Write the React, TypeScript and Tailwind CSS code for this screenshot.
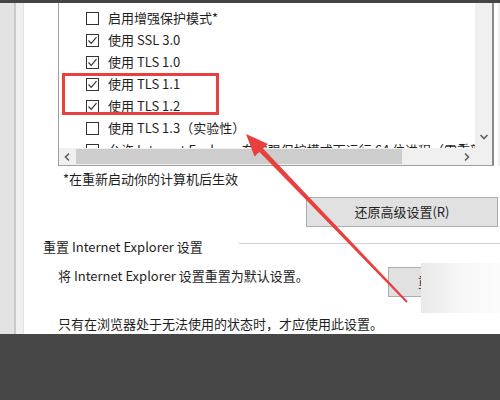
import React from "react";

const rows = [
  { label: "启用增强保护模式*", checked: false },
  { label: "使用 SSL 3.0", checked: true },
  { label: "使用 TLS 1.0", checked: true },
  { label: "使用 TLS 1.1", checked: true },
  { label: "使用 TLS 1.2", checked: true },
  { label: "使用 TLS 1.3（实验性）", checked: false },
  { label: "允许 Internet Explorer 在增强保护模式下运行 64 位进程（需重新启动计算机）", checked: false },
];

const CheckBox = ({ checked }: { checked: boolean }) => (
  <span className="w-[13px] h-[13px] border border-[#333] bg-white flex items-center justify-center shrink-0">
    {checked && (
      <svg width="11" height="11" viewBox="0 0 11 11">
        <polyline points="1.5,5.5 4.2,8.3 9.5,2.2" fill="none" stroke="#333" strokeWidth="1.2" />
      </svg>
    )}
  </span>
);

const Chevron = ({ dir }: { dir: "left" | "right" | "down" }) => {
  const pts = dir === "left" ? "6,1.5 2.5,5 6,8.5" : dir === "right" ? "3,1.5 6.5,5 3,8.5" : "1.5,3 5,6.5 8.5,3";
  return (
    <svg width="10" height="10" viewBox="0 0 10 10">
      <polyline points={pts} fill="none" stroke="#606060" strokeWidth="1.6" />
    </svg>
  );
};

export default function App() {
  return (
    <div className="relative w-[500px] h-[400px] overflow-hidden bg-white flex flex-col text-[13px] text-[#1e1e1e] font-['Noto_Sans_CJK_SC','Noto_Sans',sans-serif]">
      <div className="h-[3px] bg-[#454545]" />
      <div className="flex flex-1 min-h-0">
        <div className="w-[14px] bg-[#e3e3e3]" />
        <div className="w-[2px] bg-[#c9c9c9]" />
        <div className="w-[7px] bg-[#f0f0f0]" />
        <div className="w-px bg-[#e2e2e2]" />
        <div className="flex-1 flex flex-col">
          <div className="flex">
            <div className="ml-[34px] w-[436px] h-[163px] border-l border-b border-r-2 border-l-[#a0a0a0] border-b-[#a0a0a0] border-r-[#8a8a8a] flex flex-col">
              <div className="flex flex-1 min-h-0">
                <div className="flex-1 overflow-hidden pt-[4px]">
                  {rows.map((r) => (
                    <div key={r.label} className="h-[22px] flex items-center pl-[27px] whitespace-nowrap">
                      <CheckBox checked={r.checked} />
                      <span className="ml-[9px] leading-[22px]">{r.label}</span>
                    </div>
                  ))}
                </div>
                <div className="w-[17px] bg-[#f0f0f0] flex flex-col justify-end items-center pb-[6px]">
                  <Chevron dir="down" />
                </div>
              </div>
              <div className="h-[17px] flex bg-[#f0f0f0]">
                <div className="w-[17px] flex items-center justify-center">
                  <Chevron dir="left" />
                </div>
                <div className="flex-1 flex items-center pr-[56px] pl-[0px]">
                  <div className="w-full h-[15px] bg-[#cdcdcd]" />
                </div>
                <div className="w-[17px] flex items-center justify-center">
                  <Chevron dir="right" />
                </div>
                <div className="w-[17px] bg-[#f0f0f0]" />
              </div>
            </div>
            <div className="flex-1 bg-[#eeeeee] ml-[4px]" />
          </div>

          <p className="mt-[3px] ml-[39px] leading-[20px]">*在重新启动你的计算机后生效</p>

          <div className="mt-[8px] ml-[282px] w-[192px] h-[30px] bg-[#e1e1e1] border border-[#adadad] flex items-center justify-center">
            还原高级设置(R)
          </div>

          <div className="mt-[10px] flex items-start">
            <span className="ml-[19px] leading-[20px] whitespace-nowrap">重置 Internet Explorer 设置</span>
            <div className="flex-1 h-px bg-[#d0d0d0] ml-[36px] mt-[6px]" />
          </div>

          <div className="mt-[9px] flex items-start">
            <span className="ml-[34px] w-[330px] leading-[20px] whitespace-nowrap">将 Internet Explorer 设置重置为默认设置。</span>
            <div className="mt-[1px] w-[110px] h-[30px] bg-[#e1e1e1] border border-[#adadad] flex items-center pl-[29px]">
              重置(S)...
            </div>
          </div>

          <p className="mt-[17px] ml-[34px] leading-[20px] whitespace-nowrap">只有在浏览器处于无法使用的状态时，才应使用此设置。</p>
        </div>
      </div>
      <div className="h-[66px] bg-[#474747]" />

      <div className="absolute left-[62px] top-[73px] w-[157px] h-[42px] border-[3px] border-[#e8403f]" />

      <div className="absolute left-[421px] top-[263px] w-[79px] h-[50px] bg-linear-to-r from-[#e9e9e9] via-[#f7f7f7] to-[#fbfbfb]" />

      <svg className="absolute inset-0 pointer-events-none" width="500" height="400" viewBox="0 0 500 400">
        <polygon points="407.7,301.3 406.3,302.7 259.2,151.7 262.8,148.3" fill="#e8403f" />
        <polygon points="246,134 268,144 254.5,156.5" fill="#e8403f" />
      </svg>
    </div>
  );
}
